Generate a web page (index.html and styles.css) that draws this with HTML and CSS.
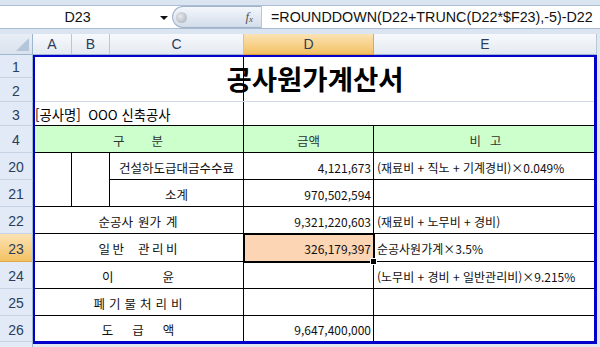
FILE: index.html
```html
<!DOCTYPE html>
<html lang="ko">
<head>
<meta charset="utf-8">
<title>공사원가계산서</title>
<link rel="stylesheet" href="styles.css">
</head>
<body>
<div class="app">
  <div class="ribbon-edge"></div>
  <div class="fbar">
    <div class="namebox"><span class="nb-text">D23</span><span class="nb-arrow"></span></div>
    <div class="fx-pill"><span class="knob"></span><span class="fx">f<sub>x</sub></span></div>
    <div class="formula">=ROUNDDOWN(D22+TRUNC(D22*$F23),-5)-D22</div>
  </div>
  <div class="fgap"></div>
  <div class="sheet">
    <div class="corner"></div>
    <div class="ch">A</div>
    <div class="ch">B</div>
    <div class="ch">C</div>
    <div class="ch ch-sel">D</div>
    <div class="ch">E</div>

    <div class="rh">1</div>
    <div class="cell title">공사원가계산서</div>
    <div class="rh">2</div>

    <div class="rh">3</div>
    <div class="cell span3 proj bd">[공사명]&nbsp;&nbsp;OOO 신축공사</div>
    <div class="cell span2 bb"></div>

    <div class="rh">4</div>
    <div class="cell span3 green bd center ko muted"><span class="sp g27"><span>구</span><span>분</span></span></div>
    <div class="cell green bd center ko muted">금액</div>
    <div class="cell green bb center ko muted"><span class="sp g10"><span>비</span><span>고</span></span></div>

    <div class="rh">20</div>
    <div class="cell tall bd"></div>
    <div class="cell tall bd"></div>
    <div class="cell bd center ko">건설하도급대금수수료</div>
    <div class="cell bd num">4,121,673</div>
    <div class="cell bb note">(재료비 + 직노 + 기계경비)×0.049%</div>

    <div class="rh">21</div>
    <div class="cell bd center ko">소계</div>
    <div class="cell bd num">970,502,594</div>
    <div class="cell bb note"></div>

    <div class="rh">22</div>
    <div class="cell span3 bd center ko"><span class="sp g6"><span>순공사</span><span>원가</span><span>계</span></span></div>
    <div class="cell bd num">9,321,220,603</div>
    <div class="cell bb note">(재료비 + 노무비 + 경비)</div>

    <div class="rh rh-sel">23</div>
    <div class="cell span3 bd center ko"><span class="sp g3"><span>일</span><span>반</span><span class="gapx"></span><span>관</span><span>리</span><span>비</span></span></div>
    <div class="cell bd num sel">326,179,397</div>
    <div class="cell bb note">순공사원가계×3.5%</div>

    <div class="rh">24</div>
    <div class="cell span3 bd center ko"><span class="sp g50"><span>이</span><span>윤</span></span></div>
    <div class="cell bd num"></div>
    <div class="cell bb note">(노무비 + 경비 + 일반관리비)×9.215%</div>

    <div class="rh">25</div>
    <div class="cell span3 bd center ko"><span class="sp g5"><span>폐</span><span>기</span><span>물</span><span>처</span><span>리</span><span>비</span></span></div>
    <div class="cell bd num"></div>
    <div class="cell bb note"></div>

    <div class="rh">26</div>
    <div class="cell span3 bd center ko"><span class="sp g20"><span>도</span><span>급</span><span>액</span></span></div>
    <div class="cell bd num">9,647,400,000</div>
    <div class="cell bb note"></div>

    <div class="rh rh-end"></div>

    <div class="frame"></div>
  </div>
</div>
</body>
</html>
```

FILE: styles.css
```css
html, body {
  margin: 0;
  padding: 0;
}
body {
  width: 600px;
  height: 347px;
  overflow: hidden;
  background: #e3e8ef;
  font-family: "Noto Sans CJK KR", "Noto Sans", sans-serif;
  color: #111;
}
.app {
  width: 600px;
  height: 347px;
}
.ribbon-edge {
  height: 6px;
  box-sizing: border-box;
  background: #dbe5f1;
  border-bottom: 1px solid #aebfd5;
}
.fbar {
  height: 23px;
  box-sizing: border-box;
  display: flex;
  background: #fff;
  border-bottom: 1px solid #a9bbd2;
  font-family: "Liberation Sans", Arial, sans-serif;
}
.namebox {
  width: 172px;
  display: flex;
  align-items: center;
}
.nb-text {
  width: 155px;
  text-align: center;
  font-size: 14.3px;
  color: #111;
}
.nb-arrow {
  width: 0;
  height: 0;
  margin-left: 5px;
  margin-top: 2px;
  border-left: 4px solid transparent;
  border-right: 4px solid transparent;
  border-top: 4px solid #111;
}
.fx-pill {
  width: 90px;
  box-sizing: border-box;
  display: flex;
  align-items: center;
  border: 1px solid #9fb2c9;
  border-right: 1px solid #b8c6d6;
  border-radius: 12px 0 0 12px;
  background: linear-gradient(#f4f7fb, #dfe7f1 60%, #d3dde9);
}
.knob {
  width: 11px;
  height: 11px;
  margin-left: 3px;
  border-radius: 50%;
  background: radial-gradient(circle at 40% 40%, #e6e9ed, #b9bec6 70%, #a9aeb6);
}
.fx {
  margin-left: auto;
  margin-right: 8px;
  font-family: "Liberation Serif", serif;
  font-style: italic;
  font-size: 13px;
  color: #555;
  line-height: 1;
}
.fx sub {
  font-size: 9px;
  vertical-align: -1px;
}
.formula {
  padding-left: 9px;
  display: flex;
  align-items: center;
  font-size: 14.3px;
  color: #111;
  white-space: nowrap;
}
.fgap {
  height: 5px;
  background: #dbe5f1;
}

.sheet {
  position: relative;
  display: grid;
  grid-template-columns: 33px 39px 38px 134px 130px 223px;
  grid-template-rows: 21px 23px 24px 24px 27px 27px 27px 27px 28px 27px 27px 26px 5px;
  width: 597px;
}
.corner {
  box-sizing: border-box;
  background: linear-gradient(#e9eef5, #d9e2ee);
  border-right: 1px solid #9eb6ce;
  border-bottom: 1px solid #9eb6ce;
  position: relative;
}
.corner::after {
  content: "";
  position: absolute;
  right: 3px;
  bottom: 3px;
  width: 0;
  height: 0;
  border-left: 13px solid transparent;
  border-bottom: 13px solid #b6c6da;
}
.ch {
  box-sizing: border-box;
  display: flex;
  align-items: center;
  justify-content: center;
  background: linear-gradient(#f7f9fc, #e4eaf2);
  border-right: 1px solid #b7c6d9;
  border-bottom: 1px solid #9eb6ce;
  font-family: "Liberation Sans", Arial, sans-serif;
  font-size: 14px;
  color: #2a3e5c;
}
.ch-sel {
  background: linear-gradient(#fbe3b5, #f7cf84 60%, #f2c163);
  border-right-color: #e1a94a;
  border-bottom-color: #d99f3e;
}
.rh {
  grid-column: 1;
  box-sizing: border-box;
  display: flex;
  align-items: center;
  justify-content: center;
  background: #e1eaf6;
  border-right: 1px solid #9eb6ce;
  border-bottom: 1px solid #c5d3e4;
  font-family: "Liberation Sans", Arial, sans-serif;
  font-size: 14px;
  color: #2a3e5c;
  padding-top: 2px;
}
.rh-sel {
  background: linear-gradient(#fbe3b5, #f7cf84 60%, #f2c163);
  border-bottom-color: #e1a94a;
}
.rh-end {
  border-bottom: none;
}

.cell {
  box-sizing: border-box;
  background: #fff;
  font-size: 12px;
  display: flex;
  align-items: center;
  white-space: nowrap;
  padding-top: 2px;
}
.ko {
  font-size: 12.5px;
}
.title {
  grid-column: 2 / span 5;
  grid-row: 2 / span 2;
  justify-content: center;
  font-size: 27.5px;
  font-weight: 700;
  color: #000;
  padding-top: 0;
  border-bottom: 1px solid #d0d7e5;
  background: linear-gradient(to right, transparent 210px, #000 210px, #000 211px, transparent 211px), #fff;
}
.span3 { grid-column: span 3; }
.span2 { grid-column: span 2; }
.tall { grid-row: span 2; }
.bd {
  border-right: 1px solid #000;
  border-bottom: 1px solid #000;
}
.bb {
  border-bottom: 1px solid #000;
}
.proj {
  padding-left: 2px;
  color: #000;
  font-size: 13.3px;
}
.green {
  background: #ccffcc;
}
.center {
  justify-content: center;
}
.muted {
  color: #333;
}
.num {
  justify-content: flex-end;
  padding-right: 2px;
  color: #111;
}
.note {
  padding-left: 3px;
  color: #111;
}
.sp {
  display: flex;
}
.g3 { gap: 2.5px; }
.g5 { gap: 4px; }
.g6 { gap: 5px; }
.g10 { gap: 9px; }
.g20 { gap: 19px; }
.g27 { gap: 27px; }
.g50 { gap: 49px; }
.gapx { width: 9px; }

.sel {
  position: relative;
  z-index: 2;
  background: #fcd5b4;
  outline: 2px solid #000;
  outline-offset: -1px;
}
.sel::after {
  content: "";
  position: absolute;
  right: -4px;
  bottom: -4px;
  width: 5px;
  height: 5px;
  background: #000;
  border: 1px solid #fff;
}

.frame {
  position: absolute;
  left: 33px;
  top: 21px;
  width: 564px;
  height: 289px;
  box-sizing: border-box;
  border-top: 2px solid #0000c8;
  border-left: 2px solid #0000c8;
  border-right: 3px solid #0000c8;
  border-bottom: 3px solid #0000c8;
  pointer-events: none;
  z-index: 3;
}
```
